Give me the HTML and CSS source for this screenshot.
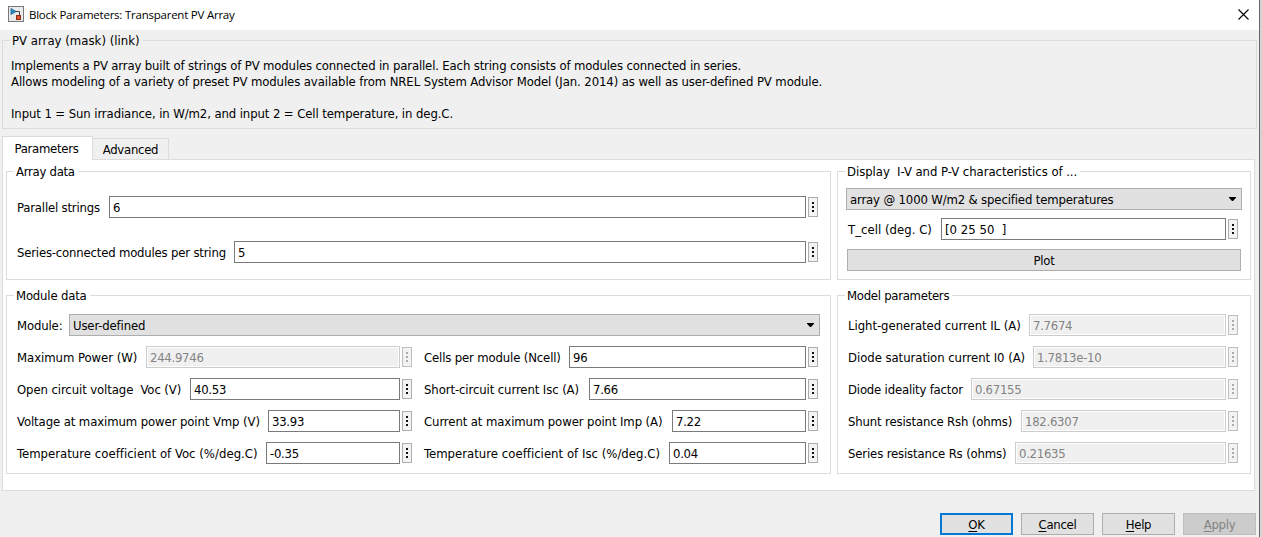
FILE: index.html
```html
<!DOCTYPE html>
<html lang="en">
<head>
<meta charset="utf-8">
<title>Block Parameters: Transparent PV Array</title>
<link rel="stylesheet" href="styles.css">
</head>
<body>
<div class="window">
  <header class="titlebar">
    <svg class="app-icon" width="16" height="16" viewBox="0 0 16 16">
      <rect x=".5" y=".5" width="15" height="15" fill="#e9eaec" stroke="#777"/>
      <path d="M7 5.500h4.500V9" fill="none" stroke="#444"/>
      <path d="M3 2.500l5 3L3 8.500z" fill="#2e8fc4" stroke="#17608c" stroke-width=".8"/>
      <rect x="8.500" y="9.500" width="4" height="4" fill="#d9532c" stroke="#8f2d10"/>
    </svg>
    <span class="title">Block Parameters: Transparent PV Array</span>
    <svg class="close" width="11" height="11" viewBox="0 0 11 11"><path d="M.5.5l10 10M10.500.5l-10 10" stroke="#000" stroke-width="1.100"/></svg>
  </header>

  <section class="group mask">
    <h2 class="legend track-0">PV array (mask) (link)</h2>
    <p class="track-3">Implements a PV array built of strings of PV modules connected in parallel. Each string consists of modules connected in series.</p>
    <p class="track-2">Allows modeling of a variety of preset PV modules available from NREL System Advisor Model (Jan. 2014) as well as user-defined PV module.</p>
    <p>&nbsp;</p>
    <p class="track-2">Input 1 = Sun irradiance, in W/m2, and input 2 = Cell temperature, in deg.C.</p>
  </section>

  <nav class="tabs">
    <span class="tab active">Parameters</span><span class="tab">Advanced</span>
  </nav>

  <main class="panel">
    <section class="group array">
      <h2 class="legend">Array data</h2>
      <div class="field"><label class="w92 track-4">Parallel strings</label><span class="input">6</span><i class="more"></i></div>
      <div class="field"><label class="w217 track-4">Series-connected modules per string</label><span class="input">5</span><i class="more"></i></div>
    </section>

    <section class="group display">
      <h2 class="legend track-1">Display&nbsp; I-V and P-V characteristics of ...</h2>
      <div class="select track-3">array @ 1000 W/m2 &amp; specified temperatures</div>
      <div class="field"><label class="w93 track-0">T_cell (deg. C)</label><span class="input track-0">[0 25 50&nbsp; ]</span><i class="more"></i></div>
      <button class="btn plot">Plot</button>
    </section>

    <section class="group module">
      <h2 class="legend track-4">Module data</h2>
      <div class="field preset"><label class="w52 track-3">Module:</label><div class="select track-3">User-defined</div></div>
      <div class="columns">
        <div class="column">
          <div class="field off"><label class="w129 track-1">Maximum Power (W)</label><span class="input">244.9746</span><i class="more"></i></div>
          <div class="field"><label class="w173 track-2">Open circuit voltage&nbsp; Voc (V)</label><span class="input">40.53</span><i class="more"></i></div>
          <div class="field"><label class="w251 track-2">Voltage at maximum power point Vmp (V)</label><span class="input">33.93</span><i class="more"></i></div>
          <div class="field"><label class="w249 track-0">Temperature coefficient of Voc (%/deg.C)</label><span class="input">-0.35</span><i class="more"></i></div>
        </div>
        <div class="column">
          <div class="field"><label class="w145 track-3">Cells per module (Ncell)</label><span class="input">96</span><i class="more"></i></div>
          <div class="field"><label class="w165 track-2">Short-circuit current Isc (A)</label><span class="input">7.66</span><i class="more"></i></div>
          <div class="field"><label class="w248 track-2">Current at maximum power point Imp (A)</label><span class="input">7.22</span><i class="more"></i></div>
          <div class="field"><label class="w245 track-0">Temperature coefficient of Isc (%/deg.C)</label><span class="input">0.04</span><i class="more"></i></div>
        </div>
      </div>
    </section>

    <section class="group model">
      <h2 class="legend">Model parameters</h2>
      <div class="field off"><label class="w181 track-1">Light-generated current IL (A)</label><span class="input">7.7674</span><i class="more"></i></div>
      <div class="field off"><label class="w185 track-1">Diode saturation current I0 (A)</label><span class="input">1.7813e-10</span><i class="more"></i></div>
      <div class="field off"><label class="w123 track-4">Diode ideality factor</label><span class="input">0.67155</span><i class="more"></i></div>
      <div class="field off"><label class="w173 track-3">Shunt resistance Rsh (ohms)</label><span class="input">182.6307</span><i class="more"></i></div>
      <div class="field off"><label class="w167 track-3">Series resistance Rs (ohms)</label><span class="input">0.21635</span><i class="more"></i></div>
    </section>
  </main>

  <footer class="actions">
    <button class="btn primary"><u>O</u>K</button>
    <button class="btn"><u>C</u>ancel</button>
    <button class="btn"><u>H</u>elp</button>
    <button class="btn" disabled><u>A</u>pply</button>
  </footer>
</div>
</body>
</html>
```
FILE: styles.css
```css
* { box-sizing: border-box; }
body { margin: 0; width: 1262px; height: 537px; overflow: hidden; background: #d4d4d4; }
.window {
  width: 1260px; height: 537px; background: #f0f0f0; border-right: 1px solid #666;
  font: 13px/16px "DejaVu Sans Condensed", "DejaVu Sans", sans-serif;
  letter-spacing: -0.28px; color: #000; white-space: nowrap;
}
.titlebar { display: flex; align-items: center; height: 30px; padding: 0 10px 2px 8px; background: #fff; }
.title { flex: 1; margin-left: 5px; padding-top: 2px; font: 11.5px/16px "Open Sans", sans-serif; letter-spacing: -0.23px; }
.close { display: block; }

.group { border: 1px solid #dcdcdc; }
.legend { width: max-content; height: 16px; margin: -8px 0 0 7px; padding: 0 3px 0 2px; background: #fff; font: inherit; }
p { margin: 0; }
.mask { height: 89px; margin: 10px 2px 0; }
.mask .legend { margin: -8px 0 9px 7px; background: #f0f0f0; }
.mask p { padding-left: 8px; }

.tabs { display: flex; align-items: flex-end; height: 30px; padding-left: 2px; }
.tab { width: 76px; height: 21px; padding-top: 3px; border: 1px solid #dcdcdc; border-width: 1px 1px 0 0; text-align: center; }
.tab.active { width: 91px; height: 24px; margin-bottom: -1px; padding: 4px 2px 0 0; border-left-width: 1px; background: #fff; position: relative; }

.panel {
  display: grid; grid-template: 109px 179px / 825px 414px; gap: 15px 6px;
  width: 1253px; height: 332px; margin-left: 2px; padding: 11px 0 0 3px;
  border: 1px solid #dcdcdc; background: #fff;
}
.field { display: flex; align-items: center; height: 22px; }
label { padding-top: 2px; }
.input { flex: 1; height: 22px; padding: 3px 3px; border: 1px solid #7a7a7a; background: #fff; }
.more {
  width: 10px; height: 20px; margin-left: 2px; border: 1px solid #adadad;
  background:
    linear-gradient(#111, #111) 3px 4px / 2px 2px no-repeat,
    linear-gradient(#111, #111) 3px 8px / 2px 2px no-repeat,
    linear-gradient(#111, #111) 3px 12px / 2px 2px no-repeat, #f3f3f3;
}
.off .input { border-color: #ccc; background: #f0f0f0; color: #838383; box-shadow: inset 0 0 0 1px #fff; }
.off .more {
  border-color: #bfbfbf;
  background:
    linear-gradient(#aaa, #aaa) 3px 4px / 2px 2px no-repeat,
    linear-gradient(#aaa, #aaa) 3px 8px / 2px 2px no-repeat,
    linear-gradient(#aaa, #aaa) 3px 12px / 2px 2px no-repeat, #f3f3f3;
}
.select { display: flex; justify-content: space-between; height: 22px; padding: 3px 5px 0 3px; border: 1px solid #adadad; background: #e1e1e1; }
.select::after { content: ""; width: 7px; height: 4px; margin-top: 5px; background: #000; clip-path: polygon(0 0, 100% 0, 100% 20%, 57% 100%, 43% 100%, 0 20%); }

.array .field { margin: 16px 12px 0 10px; }
.array .field + .field { margin-top: 23px; }
.display .select { margin: 8px 8px 0; }
.display .field { margin: 8px 12px 0 10px; }
.module .preset { margin: 10px 10px 10px; }
.preset .select { flex: 1; }
.columns { display: grid; grid-template-columns: 395px 394px; gap: 12px; padding-left: 10px; }
.column { display: grid; row-gap: 10px; }
.model .field { margin: 0 12px 10px 10px; }
.model .legend { margin-bottom: 10px; }

.btn { width: 73px; height: 22px; padding: 1px 0 0; border: 1px solid #adadad; background: #e1e1e1; font: inherit; letter-spacing: inherit; color: #000; text-align: center; }
.btn.plot { display: block; width: 394px; margin: 9px 0 0 9px; }
.btn u { text-underline-offset: 2px; }
.btn.primary { border: 2px solid #0078d7; }
.btn:disabled { border-color: #bfbfbf; background: #ccc; color: #838383; }
.actions { display: flex; gap: 8px; justify-content: flex-end; padding: 22px 3px 0 0; }

/* Label tracking, loosest to tightest */
.track-0 { letter-spacing: 0.02px; }
.track-1 { letter-spacing: -0.05px; }
.track-2 { letter-spacing: -0.1px; }
.track-3 { letter-spacing: -0.15px; }
.track-4 { letter-spacing: -0.19px; }

/* Label widths */
.w52 { width: 52px; } .w92 { width: 92px; } .w93 { width: 93px; } .w123 { width: 123px; }
.w129 { width: 129px; } .w145 { width: 145px; } .w165 { width: 165px; } .w167 { width: 167px; }
.w173 { width: 173px; } .w181 { width: 181px; } .w185 { width: 185px; } .w217 { width: 217px; }
.w245 { width: 245px; } .w248 { width: 248px; } .w249 { width: 249px; } .w251 { width: 251px; }
```
